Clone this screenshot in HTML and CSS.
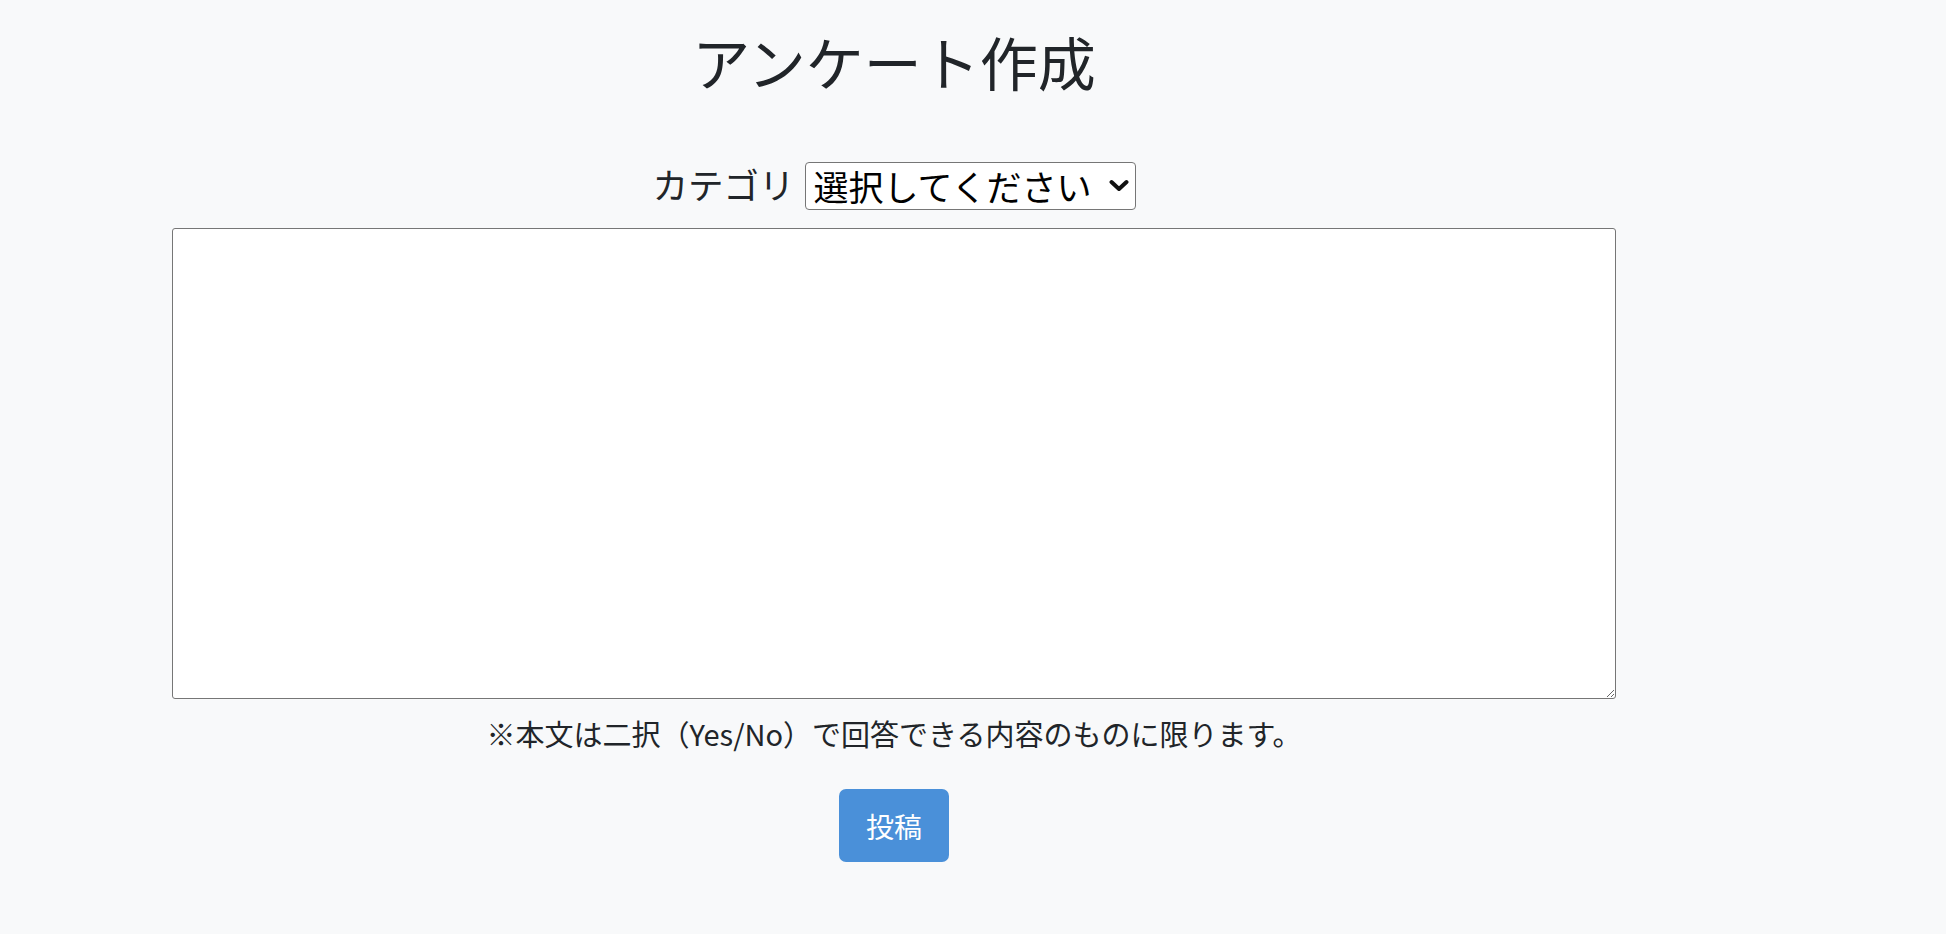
FILE: index.html
```html
<!DOCTYPE html>
<html lang="ja">
<head>
<meta charset="utf-8">
<title>アンケート作成</title>
<link rel="stylesheet" href="styles.css">
</head>
<body>
<main class="page">
  <h1 class="title">アンケート作成</h1>
  <form class="form">
    <div class="category-row">
      <label class="category-label" for="category">カテゴリ</label>
      <span class="select-wrap">
        <select id="category" class="category-select">
          <option>選択してください</option>
        </select>
        <svg class="chevron" width="20" height="13" viewBox="0 0 20 13" aria-hidden="true"><path d="M2.5 3 L10 10 L17.5 3" fill="none" stroke="#111" stroke-width="4" stroke-linecap="round" stroke-linejoin="round"/></svg>
      </span>
    </div>
    <textarea class="body-input"></textarea>
    <p class="note">※本文は二択（Yes/No）で回答できる内容のものに限ります。</p>
    <button type="button" class="submit">投稿</button>
  </form>
</main>
</body>
</html>
```

FILE: styles.css
```css
html, body {
  margin: 0;
  padding: 0;
  background: #f8f9fa;
  color: #212529;
  font-family: "Noto Sans CJK JP", "Noto Sans", sans-serif;
}

.page {
  width: 1788px;
  text-align: center;
}

.title {
  margin: 26px 0 0;
  font-size: 58px;
  font-weight: 400;
  line-height: 70px;
}

.form {
  display: flex;
  flex-direction: column;
  align-items: center;
}

.category-row {
  margin-top: 66px;
  height: 48px;
  display: flex;
  align-items: center;
  gap: 10px;
}

.category-label {
  font-size: 35.5px;
  line-height: 48px;
  margin-top: -4px;
}

.select-wrap {
  position: relative;
  display: inline-block;
}

.category-select {
  -webkit-appearance: none;
  appearance: none;
  box-sizing: border-box;
  width: 331px;
  height: 48px;
  padding: 0 0 0 8px;
  border: 1.5px solid #767676;
  border-radius: 4px;
  background: #ffffff;
  color: #000;
  font-family: "Noto Sans CJK JP", sans-serif;
  font-size: 35px;
  line-height: 46px;
}

.chevron {
  position: absolute;
  right: 7px;
  top: 17px;
  pointer-events: none;
}

.body-input {
  display: block;
  box-sizing: border-box;
  margin-top: 18px;
  width: 1444px;
  height: 471px;
  border: 1.5px solid #767676;
  border-radius: 3px;
  background: #ffffff;
  resize: both;
}

.note {
  margin: 13px 0 0;
  font-size: 29px;
  line-height: 42px;
}

.submit {
  margin-top: 35px;
  width: 110px;
  height: 73px;
  border: none;
  border-radius: 7px;
  background: #4a90d9;
  color: #ffffff;
  font-family: "Noto Sans CJK JP", sans-serif;
  font-size: 28px;
  padding: 0;
}
```
